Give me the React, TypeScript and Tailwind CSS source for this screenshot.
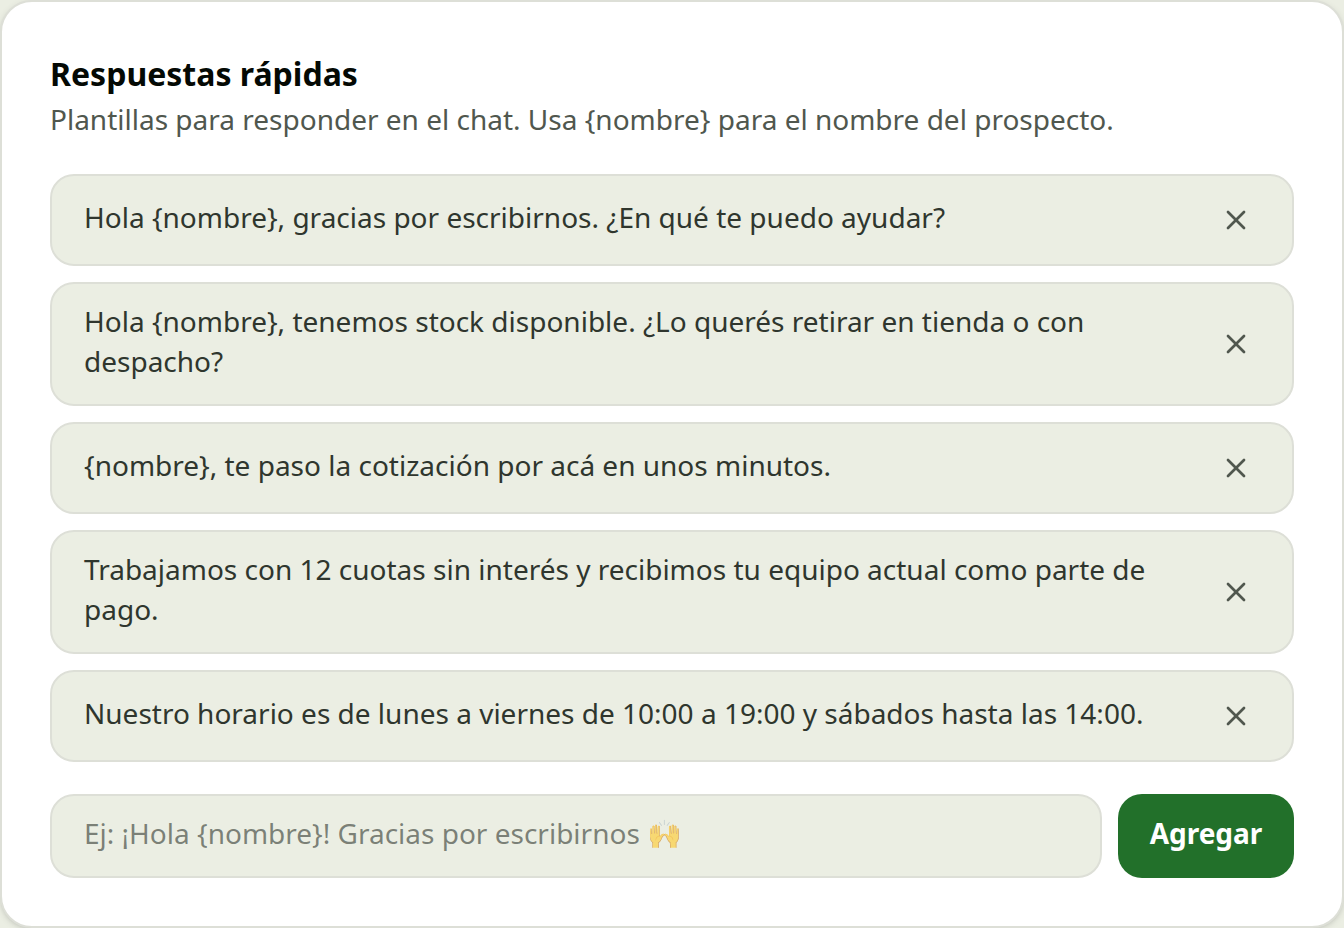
import { useState } from "react";
import { X } from "lucide-react";

const initialReplies = [
  "Hola {nombre}, gracias por escribirnos. ¿En qué te puedo ayudar?",
  "Hola {nombre}, tenemos stock disponible. ¿Lo querés retirar en tienda o con despacho?",
  "{nombre}, te paso la cotización por acá en unos minutos.",
  "Trabajamos con 12 cuotas sin interés y recibimos tu equipo actual como parte de pago.",
  "Nuestro horario es de lunes a viernes de 10:00 a 19:00 y sábados hasta las 14:00.",
];

export default function App() {
  const [replies, setReplies] = useState(initialReplies);
  const [draft, setDraft] = useState("");

  const addReply = () => {
    const text = draft.trim();
    if (!text) return;
    setReplies([...replies, text]);
    setDraft("");
  };

  return (
    <main className="min-h-screen bg-[#ebeee3] font-['Noto_Sans',sans-serif]">
      <section className="rounded-[32px] border-2 border-[#dddfd7] bg-white p-12 shadow-[0_2px_6px_rgba(0,0,0,0.1),0_2px_4px_-2px_rgba(0,0,0,0.1)]">
        <h2 className="text-[32px] leading-12 font-bold text-[#040904]">Respuestas rápidas</h2>
        <p className="mt-px text-[28px] leading-10 text-[#50574e]">
          Plantillas para responder en el chat. Usa {"{nombre}"} para el nombre del prospecto.
        </p>
        <ul className="mt-[35px] flex flex-col gap-4">
          {replies.map((reply, index) => (
            <li
              key={reply}
              className="flex items-center gap-4 rounded-3xl border-2 border-[#dddfd7] bg-[#ebeee3] px-8 py-4"
            >
              <span className="flex-1 pt-px pb-[7px] text-[28px] leading-10 text-[#2f362e]">{reply}</span>
              <button
                type="button"
                aria-label="Eliminar respuesta"
                onClick={() => setReplies(replies.filter((_, i) => i !== index))}
                className="flex h-14 w-12 shrink-0 items-center justify-center text-[#50574e]"
              >
                <X size={32} />
              </button>
            </li>
          ))}
        </ul>
        <div className="mt-8 flex gap-4">
          <input
            type="text"
            aria-label="Nueva respuesta"
            value={draft}
            onChange={(event) => setDraft(event.target.value)}
            placeholder="Ej: ¡Hola {nombre}! Gracias por escribirnos 🙌"
            className="h-21 min-w-0 flex-1 rounded-3xl border-2 border-[#dddfd7] bg-[#ebeee3] px-8 pb-1.5 text-[28px] text-[#2f362e] placeholder:text-[#2f362e]/60"
          />
          <button
            type="button"
            onClick={addReply}
            className="h-21 w-44 shrink-0 rounded-3xl bg-[#22702a] pb-1.5 text-[28px] font-bold text-white"
          >
            Agregar
          </button>
        </div>
      </section>
    </main>
  );
}
